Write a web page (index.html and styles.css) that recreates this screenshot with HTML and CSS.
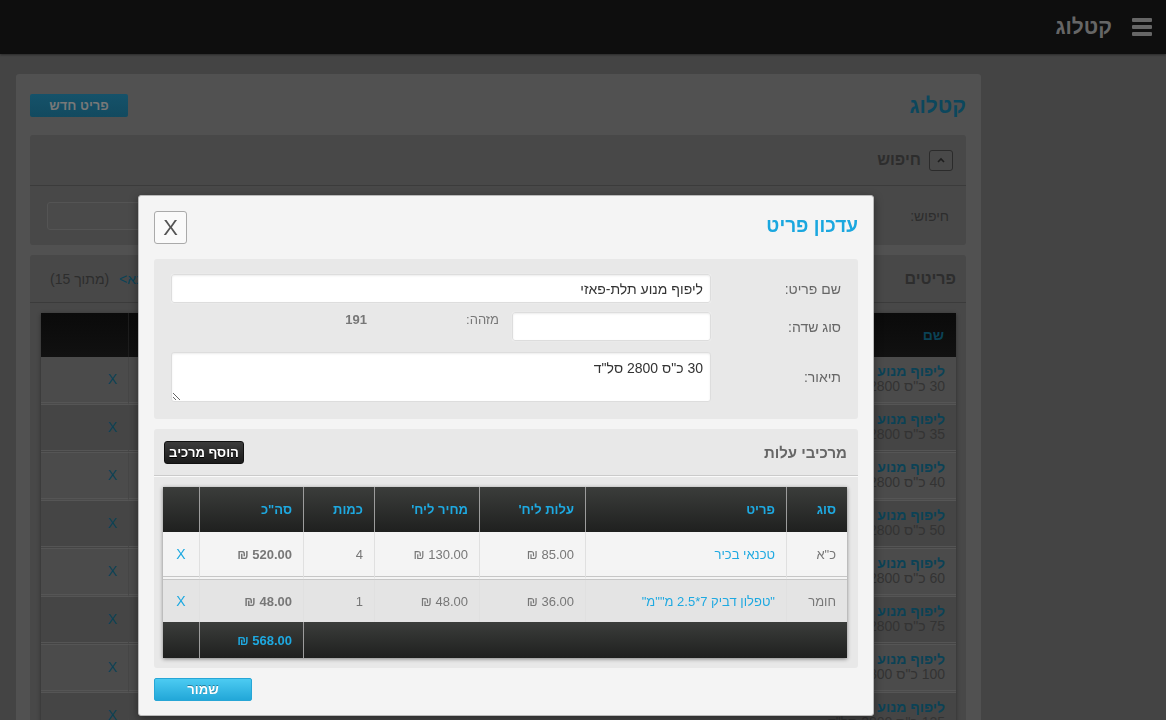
FILE: index.html
```html
<!DOCTYPE html>
<html lang="he" dir="rtl">
<head>
<meta charset="utf-8">
<title>קטלוג</title>
<link rel="stylesheet" href="styles.css">
</head>
<body>
<header class="topbar">
  <span class="burger"><i></i><i></i><i></i></span>
  <span class="brand">קטלוג</span>
</header>

<main class="page">
  <div class="card">
    <div class="card-head">
      <h1 class="card-title">קטלוג</h1>
      <button class="btn-new">פריט חדש</button>
    </div>

    <section class="panel">
      <div class="panel-head">
        <button class="toggle" aria-label="toggle"><svg width="10" height="8" viewBox="0 0 10 8"><polyline points="2,6 5,3 8,6" fill="none" stroke="#1e1e1e" stroke-width="1.6"/></svg></button>
        <h2 class="panel-title">חיפוש</h2>
      </div>
      <div class="search-body">
        <label class="search-label">חיפוש:</label>
        <input class="search-input" type="text">
      </div>
    </section>

    <section class="panel items">
      <div class="panel-head items-head">
        <h2 class="panel-title">פריטים</h2>
        <span class="pager"><a class="pager-link">הבא&gt;</a> (מתוך 15)</span>
      </div>
      <div class="items-wrap">
        <table class="items-table">
          <colgroup><col class="w-name"><col><col><col><col class="w-del"></colgroup>
          <thead>
            <tr><th>שם</th><th></th><th></th><th></th><th></th></tr>
          </thead>
          <tbody>
            <tr><td><a class="item-link">ליפוף מנוע תלת-פאזי</a><div class="item-desc">30 כ"ס 2800 סל"ד</div></td><td></td><td></td><td></td><td class="del"><a>X</a></td></tr>
            <tr><td><a class="item-link">ליפוף מנוע תלת-פאזי</a><div class="item-desc">35 כ"ס 2800 סל"ד</div></td><td></td><td></td><td></td><td class="del"><a>X</a></td></tr>
            <tr><td><a class="item-link">ליפוף מנוע תלת-פאזי</a><div class="item-desc">40 כ"ס 2800 סל"ד</div></td><td></td><td></td><td></td><td class="del"><a>X</a></td></tr>
            <tr><td><a class="item-link">ליפוף מנוע תלת-פאזי</a><div class="item-desc">50 כ"ס 2800 סל"ד</div></td><td></td><td></td><td></td><td class="del"><a>X</a></td></tr>
            <tr><td><a class="item-link">ליפוף מנוע תלת-פאזי</a><div class="item-desc">60 כ"ס 2800 סל"ד</div></td><td></td><td></td><td></td><td class="del"><a>X</a></td></tr>
            <tr><td><a class="item-link">ליפוף מנוע תלת-פאזי</a><div class="item-desc">75 כ"ס 2800 סל"ד</div></td><td></td><td></td><td></td><td class="del"><a>X</a></td></tr>
            <tr><td><a class="item-link">ליפוף מנוע תלת-פאזי</a><div class="item-desc">100 כ"ס 2800 סל"ד</div></td><td></td><td></td><td></td><td class="del"><a>X</a></td></tr>
            <tr><td><a class="item-link">ליפוף מנוע תלת-פאזי</a><div class="item-desc">125 כ"ס 2800 סל"ד</div></td><td></td><td></td><td></td><td class="del"><a>X</a></td></tr>
          </tbody>
        </table>
      </div>
    </section>
  </div>
</main>

<div class="backdrop"></div>

<div class="modal">
  <div class="modal-head">
    <h3 class="modal-title">עדכון פריט</h3>
    <button class="close">X</button>
  </div>

  <div class="form-panel">
    <label class="f-label">שם פריט:</label>
    <div class="f-control"><input class="f-input" type="text" value="ליפוף מנוע תלת-פאזי"></div>

    <label class="f-label">סוג שדה:</label>
    <div class="f-control f-row">
      <input class="f-input f-short" type="text">
      <span class="id-label">מזהה:</span>
      <span class="id-value">191</span>
    </div>

    <label class="f-label f-label-ta">תיאור:</label>
    <div class="f-control f-ta"><textarea class="f-textarea">30 כ"ס 2800 סל"ד</textarea></div>
  </div>

  <div class="cost-panel">
    <div class="cost-head">
      <h4 class="cost-title">מרכיבי עלות</h4>
      <button class="btn-add">הוסף מרכיב</button>
    </div>
    <div class="cost-wrap">
      <table class="cost-table">
        <colgroup>
          <col class="cw-type"><col class="cw-item"><col class="cw-cost"><col class="cw-price"><col class="cw-qty"><col class="cw-total"><col class="cw-del">
        </colgroup>
        <thead>
          <tr><th>סוג</th><th>פריט</th><th>עלות ליח'</th><th>מחיר ליח'</th><th>כמות</th><th>סה"כ</th><th></th></tr>
        </thead>
        <tbody>
          <tr class="r1">
            <td>כ"א</td><td><a class="c-link">טכנאי בכיר</a></td><td>85.00 ₪</td><td>130.00 ₪</td><td>4</td><td class="tot">520.00 ₪</td><td class="x"><a>X</a></td>
          </tr>
          <tr class="r2">
            <td>חומר</td><td><a class="c-link">"טפלון דביק 7*2.5 מ""מ"</a></td><td>36.00 ₪</td><td>48.00 ₪</td><td>1</td><td class="tot">48.00 ₪</td><td class="x"><a>X</a></td>
          </tr>
        </tbody>
        <tfoot>
          <tr><td colspan="5"></td><td class="grand">568.00 ₪</td><td></td></tr>
        </tfoot>
      </table>
    </div>
  </div>

  <div class="modal-foot">
    <button class="btn-save">שמור</button>
  </div>
</div>
</body>
</html>
```

FILE: styles.css
```css
* { box-sizing: border-box; }
html, body { margin: 0; height: 100%; }
body {
  font-family: "Liberation Sans", Arial, "DejaVu Sans", sans-serif;
  font-size: 13px;
  color: #333;
  background: #444;
  overflow: hidden;
}
h1, h2, h3, h4 { margin: 0; }
button { font-family: inherit; cursor: pointer; }

/* page as seen behind the modal backdrop (dimmed colours) */
.topbar {
  height: 54px;
  background: #0e0e0e;
  display: flex;
  align-items: center;
  gap: 20px;
  padding-right: 14px;
  box-shadow: 0 1px 2px rgba(0,0,0,.4);
}
.burger { display: flex; flex-direction: column; gap: 3px; width: 20px; margin-top: -1px; }
.burger i { display: block; height: 4px; background: #666; border-radius: 1px; }
.brand { font-size: 21px; font-weight: bold; color: #666; }

.page { padding: 20px 185px 0 16px; }
.card {
  background: #515151;
  border-radius: 3px;
  padding: 20px 15px 0 14px;
  min-height: 800px;
}
.card-head {
  height: 23px;
  display: flex;
  justify-content: space-between;
  align-items: center;
  margin-bottom: 18px;
}
.card-title { font-size: 21px; color: #0c475d; }
.btn-new {
  width: 98px; height: 23px;
  border: 0; border-radius: 2px;
  background: linear-gradient(#15526a, #124a5f);
  color: #787878; font-weight: bold; font-size: 13px;
}

.panel { background: #484848; border-radius: 3px; margin-bottom: 10px; }
.panel-head {
  height: 51px;
  display: flex;
  align-items: center;
  gap: 8px;
  padding: 0 13px;
  border-bottom: 1px solid #3b3b3b;
}
.panel-title { font-size: 16px; color: #2d2d2d; font-weight: bold; }
.toggle {
  width: 24px; height: 21px;
  border: 1px solid #2b2b2b; border-radius: 3px;
  background: #494949;
  display: flex; align-items: center; justify-content: center; padding: 0;
}
.search-body {
  height: 59px;
  display: flex;
  align-items: center;
  justify-content: space-between;
  padding: 0 17px;
}
.search-label { font-size: 14px; color: #2d2d2d; }
.search-input {
  width: 800px; height: 28px;
  background: #4a4a4a;
  border: 1px solid #545454; border-radius: 3px;
}

.items-head { height: 48px; padding: 0 10px 0 20px; justify-content: space-between; }
.pager { font-size: 14px; color: #2d2d2d; }
.pager-link { color: #0b4357; margin-left: 6px; }
.items-wrap { padding: 10px 10px 0 11px; }
.items-table {
  width: 100%;
  border-collapse: separate; border-spacing: 0;
  table-layout: fixed;
  box-shadow: 0 1px 4px rgba(0,0,0,.4);
}
.w-name { width: 320px; }
.w-del { width: 87px; }
.items-table th {
  height: 44px;
  background: linear-gradient(#0a0a0a, #111);
  color: #0b4256; font-size: 14px; font-weight: bold;
  text-align: right; padding: 0 12px;
  border-left: 1px solid #1d1d1d;
}
.items-table th:last-child, .items-table td:last-child { border-left: 0; }
.items-table td {
  height: 48px;
  background: #4b4b4b;
  padding: 7px 11px 0;
  vertical-align: top;
  line-height: 15px;
  font-size: 14px;
  color: #333;
  border-left: 1px solid #464646;
  border-bottom: 3px double #555;
}
.items-table tbody tr:nth-child(even) td { background: #454545; }
.item-link { color: #0b4256; font-weight: bold; display: block; white-space: nowrap; }
.item-desc { white-space: nowrap; }
.items-table td.del { vertical-align: middle; padding-top: 0; }
.del a { color: #0b4256; font-size: 14px; }

/* modal backdrop: the page above is drawn already dimmed */
.backdrop { position: fixed; inset: 0; background: transparent; }

/* modal */
.modal {
  position: fixed;
  left: 138px; top: 195px;
  width: 736px; height: 521px;
  background: #f4f4f4;
  border: 1px solid #b9b9b9;
  border-radius: 3px;
  padding: 15px;
  box-shadow: 0 3px 10px rgba(0,0,0,.4);
  display: flex; flex-direction: column;
}
.modal-head {
  height: 33px;
  display: flex; justify-content: space-between; align-items: center;
  margin-bottom: 15px;
}
.modal-title { font-size: 19px; color: #1aa7df; font-weight: bold; margin-top: -4px; }
.close {
  width: 33px; height: 33px;
  border: 1px solid #aaa; border-radius: 3px;
  background: #fafafa;
  color: #555; font-size: 22px; line-height: 1;
  padding: 0;
}

.form-panel {
  background: #e8e8e8;
  border-radius: 3px;
  padding: 15px 17px 17px;
  display: grid;
  grid-template-columns: 130px 1fr;
  row-gap: 9px;
}
.f-label { font-size: 14px; color: #666; align-self: center; }
.f-label-ta { margin-top: 2px; }
.f-input {
  width: 100%; height: 29px;
  background: #fff;
  border: 1px solid #ddd; border-radius: 3px;
  box-shadow: inset 0 1px 2px rgba(0,0,0,.08), 0 0 1px #fff;
  font-family: inherit; font-size: 14px; color: #333;
  padding: 0 7px;
}
.f-row { display: flex; align-items: flex-start; }
.f-short { width: 199px; flex: none; }
.id-label { font-size: 13px; color: #777; margin-right: 13px; line-height: 16px; }
.id-value { font-size: 13px; color: #777; font-weight: bold; margin-right: 99px; line-height: 16px; }
.f-ta { margin-top: 2px; }
.f-textarea {
  display: block;
  width: 100%; height: 50px;
  background: #fff;
  border: 1px solid #ddd; border-radius: 3px;
  box-shadow: inset 0 1px 2px rgba(0,0,0,.08);
  font-family: inherit; font-size: 14px; color: #333;
  padding: 7px 7px;
  resize: vertical;
}

.cost-panel {
  background: #e8e8e8;
  border-radius: 3px;
  margin-top: 10px;
}
.cost-head {
  height: 47px;
  display: flex; justify-content: space-between; align-items: center;
  padding: 0 11px 0 10px;
  border-bottom: 1px solid #cbcbcb;
  box-shadow: 0 1px 0 #fafafa;
}
.cost-title { font-size: 15px; color: #666; font-weight: bold; }
.btn-add {
  width: 80px; height: 23px;
  border: 1px solid #111; border-radius: 3px;
  background: linear-gradient(#3b3b3b, #1b1b1b);
  color: #fff; font-weight: bold; font-size: 13px;
  text-shadow: 0 1px 0 #000;
  padding: 0;
}
.cost-wrap { padding: 11px 11px 10px 10px; }
.cost-table {
  width: 684px;
  border-collapse: separate; border-spacing: 0;
  table-layout: fixed;
  box-shadow: 0 1px 4px rgba(0,0,0,.45);
}
.cw-type { width: 61px; }
.cw-item { width: 201px; }
.cw-cost { width: 106px; }
.cw-price { width: 105px; }
.cw-qty { width: 71px; }
.cw-total { width: 104px; }
.cw-del { width: 36px; }
.cost-table th {
  height: 45px;
  background: linear-gradient(#3b3d3b, #1f201f);
  color: #1ea9e1; font-size: 13px; font-weight: bold;
  text-align: right; padding: 0 11px;
  border-left: 1px solid #9c9c9c;
}
.cost-table th:last-child, .cost-table td:last-child { border-left: 0; }
.cost-table td {
  text-align: right; padding: 0 11px;
  color: #777; font-size: 13px;
  border-left: 1px solid #e0e0e0;
  white-space: nowrap;
}
.cost-table .r1 td { height: 48px; background: #f4f4f4; border-bottom: 4px double #c6c6c6; }
.cost-table .r2 td { height: 42px; background: #e4e4e4; padding-top: 1px; }
.c-link { color: #1ea9e1; }
.cost-table td.tot { font-weight: bold; }
.cost-table td.x { text-align: center; padding: 0; }
.x a { color: #1ea9e1; font-size: 14px; }
.cost-table tfoot td {
  height: 36px;
  background: linear-gradient(#3b3d3b, #1f201f);
  border-left: 1px solid #9c9c9c;
}
.cost-table td.grand { color: #1ea9e1; font-weight: bold; font-size: 13px; }

.modal-foot { margin-top: 10px; display: flex; justify-content: flex-end; }
.btn-save {
  width: 98px; height: 23px;
  border: 1px solid #27a6d6; border-radius: 2px;
  background: linear-gradient(#4ccbf2, #22a7d8);
  color: #fff; font-weight: bold; font-size: 13px;
  text-shadow: 0 -1px 0 rgba(0,0,0,.35);
  padding: 0;
}
```
